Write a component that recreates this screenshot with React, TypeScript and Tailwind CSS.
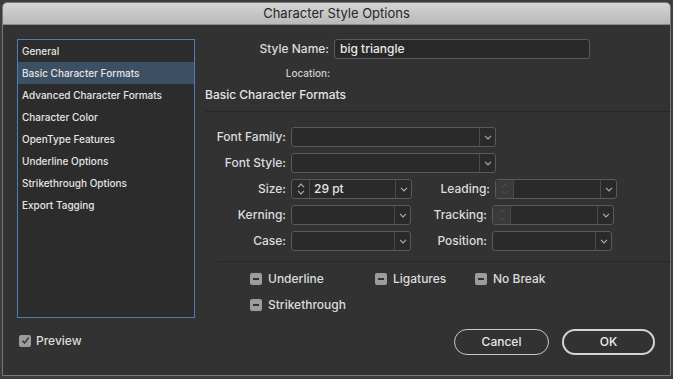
import type { ReactNode } from "react"

const font = { fontFamily: "Inter, 'Noto Sans', sans-serif" }

const sections = [
  "General",
  "Basic Character Formats",
  "Advanced Character Formats",
  "Character Color",
  "OpenType Features",
  "Underline Options",
  "Strikethrough Options",
  "Export Tagging",
]

function Chevron({ up, dim }: { up?: boolean; dim?: boolean }) {
  return (
    <svg width="8" height="5" viewBox="0 0 8 5" className={dim ? "text-[#4a4a4a]" : "text-[#b0b0b0]"}>
      <path
        d={up ? "M1 4.2 L4 1 L7 4.2" : "M1 0.8 L4 4 L7 0.8"}
        fill="none"
        stroke="currentColor"
        strokeWidth="1.1"
      />
    </svg>
  )
}

function Select({ width, value }: { width: number; value?: string }) {
  return (
    <div
      className="flex h-5 items-center rounded-[3px] border border-[#5a5a5a] bg-[#2a2a2a]"
      style={{ width }}
    >
      <span className="flex-1 px-1.5 text-[12px] text-[#e6e6e6]">{value}</span>
      <span className="flex h-full w-[16px] items-center justify-center border-l border-[#4a4a4a]">
        <Chevron />
      </span>
    </div>
  )
}

function Combo({
  inputWidth,
  value,
  disabled,
}: {
  inputWidth: number
  value?: string
  disabled?: boolean
}) {
  return (
    <div className="flex h-5 items-center rounded-[3px] border border-[#5a5a5a] bg-[#2a2a2a]">
      <span
        className={`flex h-full w-[18px] flex-col items-center justify-center gap-[2px] border-r border-[#4a4a4a] ${
          disabled ? "bg-[#3a3a3a]" : ""
        }`}
      >
        <Chevron up dim={disabled} />
        <Chevron dim={disabled} />
      </span>
      <span className="px-1 text-[12px] font-medium text-[#e6e6e6]" style={{ width: inputWidth }}>
        {value}
      </span>
      <span className="flex h-full w-[16px] items-center justify-center border-l border-[#4a4a4a]">
        <Chevron />
      </span>
    </div>
  )
}

function Label({ width, children }: { width: number; children: ReactNode }) {
  return (
    <span
      className="shrink-0 pr-[5px] text-right text-[12px] font-medium text-[#dcdcdc]"
      style={{ width }}
    >
      {children}
    </span>
  )
}

function MixedBox({ label }: { label: string }) {
  return (
    <div className="flex items-center gap-[6px]">
      <span className="flex h-3 w-3 items-center justify-center rounded-[2px] bg-[#9c9c9c]">
        <span className="h-[2px] w-[6px] bg-[#333]" />
      </span>
      <span className="text-[12px] font-medium text-[#dcdcdc]">{label}</span>
    </div>
  )
}

export default function App() {
  return (
    <div className="h-[379px] w-[673px] bg-[#3c3c3c] pt-[2px] pl-[2px]" style={font}>
      <div className="flex h-[374px] w-[669px] flex-col overflow-hidden rounded-t-[5px] border border-[#777] bg-[#323232]">
        <div className="flex h-[22px] shrink-0 items-center justify-center border-b border-[#8a8a8a] bg-[linear-gradient(#d4d4d4,#b9b9b9)] text-[13px] text-[#262626]">
          Character Style Options
        </div>

        <div className="flex pt-[14px] pl-[14px]">
          <ul className="h-[279px] w-[178px] border border-[#4a7fb8] bg-[#2c2c2c]">
            {sections.map((s) => (
              <li
                key={s}
                className={`flex h-[22px] items-center px-[4px] text-[10px] font-medium text-[#e4e4e4] ${
                  s === "Basic Character Formats" ? "bg-[#3c5064]" : ""
                }`}
              >
                {s}
              </li>
            ))}
          </ul>

          <div className="ml-[10px] flex flex-1 flex-col">
            <div className="flex h-5 items-center">
              <Label width={129}>Style Name:</Label>
              <div className="flex h-5 w-[256px] items-center rounded-[3px] border border-[#5a5a5a] bg-[#282828] px-[5px] text-[12px] font-medium text-[#e8e8e8]">
                big triangle
              </div>
            </div>
            <div className="mt-[7px] flex h-[14px] items-center">
              <span className="w-[125px] text-right text-[10px] font-medium text-[#d0d0d0]">
                Location:
              </span>
            </div>
            <div className="mt-[7px] h-4 text-[12px] leading-4 font-medium text-[#e4e4e4]">
              Basic Character Formats
            </div>
            <div className="mt-[8px] h-px bg-[#262626]" />

            <div className="mt-[15px] flex flex-col gap-[6px]">
              <div className="flex h-5 items-center">
                <Label width={86}>Font Family:</Label>
                <Select width={205} />
              </div>
              <div className="flex h-5 items-center">
                <Label width={86}>Font Style:</Label>
                <Select width={205} />
              </div>
              <div className="flex h-5 items-center">
                <Label width={86}>Size:</Label>
                <Combo inputWidth={85} value="29 pt" />
                <Label width={83}>Leading:</Label>
                <Combo inputWidth={86} disabled />
              </div>
              <div className="flex h-5 items-center">
                <Label width={86}>Kerning:</Label>
                <Select width={120} />
                <Label width={81}>Tracking:</Label>
                <Combo inputWidth={86} disabled />
              </div>
              <div className="flex h-5 items-center">
                <Label width={86}>Case:</Label>
                <Select width={120} />
                <Label width={81}>Position:</Label>
                <Select width={120} />
              </div>
            </div>

            <div className="mt-[10px] ml-[12px] h-px bg-[#262626]" />

            <div className="mt-[10px] ml-[45px] flex h-[14px] items-center">
              <div className="w-[125px]">
                <MixedBox label="Underline" />
              </div>
              <div className="w-[100px]">
                <MixedBox label="Ligatures" />
              </div>
              <MixedBox label="No Break" />
            </div>
            <div className="mt-[12px] ml-[45px] flex h-[14px] items-center">
              <MixedBox label="Strikethrough" />
            </div>
          </div>
        </div>

        <div className="mt-[11px] flex items-center pr-[15px] pl-[16px]">
          <div className="-mt-[3px] flex items-center gap-[5px]">
            <span className="flex h-3 w-3 items-center justify-center rounded-[2px] bg-[#9c9c9c]">
              <svg width="9" height="9" viewBox="0 0 9 9">
                <path d="M1.5 4.8 L3.6 7 L7.6 1.6" fill="none" stroke="#2e2e2e" strokeWidth="1.4" />
              </svg>
            </span>
            <span className="text-[12px] font-medium text-[#dcdcdc]">Preview</span>
          </div>
          <div className="ml-auto flex gap-[13px]">
            <button className="h-[26px] w-[95px] rounded-full border border-[#c8c8c8] text-[12px] font-medium text-[#e6e6e6]">
              Cancel
            </button>
            <button className="h-[26px] w-[93px] rounded-full border-2 border-[#d4d4d4] text-[12px] font-medium text-[#f0f0f0]">
              OK
            </button>
          </div>
        </div>
      </div>
    </div>
  )
}
